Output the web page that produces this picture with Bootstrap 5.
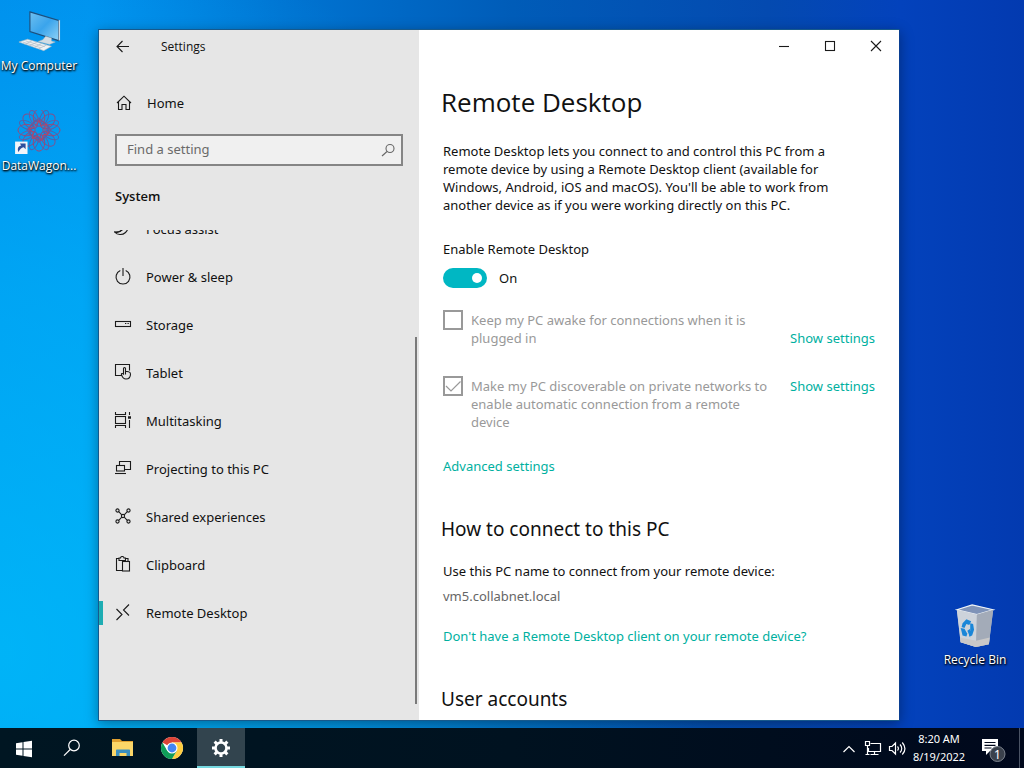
<!DOCTYPE html>
<html lang="en">
<head>
<meta charset="utf-8">
<meta name="viewport" content="width=device-width, initial-scale=1">
<title>Settings - Remote Desktop</title>
<link href="https://cdn.jsdelivr.net/npm/bootstrap@5.3.0/dist/css/bootstrap.min.css" rel="stylesheet">
<style>
body{font-family:"Noto Sans","Open Sans",sans-serif;font-size:13px;line-height:18px;color:#111;background:radial-gradient(ellipse 70% 95% at 0 85%,rgba(0,205,255,.6) 0%,rgba(0,200,255,.4) 50%,rgba(0,150,255,0) 100%),linear-gradient(90deg,#008dec 0%,#0090ee 9%,#0074d2 28%,#005cb8 50%,#044ab0 75%,#0342bc 88%,#033ab0 100%)}

/* desktop shortcuts */
.edge-left{width:98px;padding-top:10px}
.edge-right{width:124px;padding:0 10px 60px 0}
.shortcut{width:78px;color:#fff;font-size:12px;line-height:16px;font-family:"Open Sans","Noto Sans",sans-serif;white-space:nowrap;text-decoration:none;text-shadow:0 1px 2px #000,1px 1px 2px #000}
.shortcut svg{width:48px;height:44px}

/* window */
.win{margin:29px 0 7px;border:1px solid #16598c;border-right-color:#0a3f92;background:#fff;box-shadow:0 3px 12px rgba(0,0,0,.35)}
.side{width:320px;background:#e6e6e6}
.bar{height:34px}
.bar-title{padding-left:14px;font-size:12px;font-family:"Open Sans","Noto Sans",sans-serif}
.plain{border:0;padding:0;background:none;color:inherit}
.back{width:48px}
.cap{width:46px;height:32px}
.line-icon{width:18px;height:18px;flex:none;fill:none;stroke:#1a1a1a;stroke-width:1.1}
.nav-item-row{height:48px;padding-left:15px;gap:14px;color:#111;text-decoration:none}
.home-row{margin-top:15px;padding-left:16px}
.find{height:32px;margin:7px 16px 0;padding:0 4px 0 10px;border:2px solid #858585;background:#f0f0f0}
.find input{border:0;outline:0;padding:0 0 2px;background:none;color:#666}
.find input::placeholder{color:#6a6a6a;opacity:1}
.find .line-icon{stroke:#666}
.group-title{margin:18px 16px 22px;line-height:24px;font-weight:600;font-family:"Open Sans","Noto Sans",sans-serif}
.scrolled{margin-top:-25px}
.picked::before{content:"";position:absolute;left:0;width:4px;height:24px;background:#1eadb3}
.rail{right:2px;top:107px;bottom:16px;width:2px;background:#7a7a7a}

/* content */
.pane-body{padding:20px 24px 0}
.pane-body h1{margin:0 0 22px -2px;font:400 26px/36px "Open Sans","Noto Sans",sans-serif}
.pane-body h2{margin:41px 0 20px -2px;font-size:19px;line-height:26px;font-weight:400}
.blurb{max-width:400px;margin-bottom:26px}
.teal{color:#00b09f;text-decoration:none}
.switch-row{margin:10px 0 23px;gap:12px}
.toggle.form-check-input{width:44px;height:20px;margin:0;border:0;border-radius:10px;background:#00b7c3 url("data:image/svg+xml,%3Csvg xmlns='http://www.w3.org/2000/svg' viewBox='0 0 44 20'%3E%3Ccircle cx='34' cy='10' r='5' fill='%23fff'/%3E%3C/svg%3E") 0 0/44px 20px}
.option-row{margin-bottom:30px}
.option-row + .option-row{margin-bottom:26px}
.option{gap:8px;color:#999}
.box.form-check-input{flex:none;width:20px;height:20px;margin:-1px 0 0;border:2px solid #999;border-radius:0;background-color:#fff;opacity:1}
.box.form-check-input:checked{background-size:16px 16px;background-image:url("data:image/svg+xml,%3Csvg xmlns='http://www.w3.org/2000/svg' viewBox='0 0 16 16'%3E%3Cpath d='M1 8l5 5L15.500 3.500' fill='none' stroke='%23999' stroke-width='1.200'/%3E%3C/svg%3E")}
.option label{width:304px}
.pc-lead{margin-bottom:7px}
.pc-name{margin-bottom:22px;color:#666}

/* taskbar */
.taskbar{height:40px;background:linear-gradient(90deg,#001622,#001220 50%,#00081c);color:#fff}
.task{width:48px;height:40px;border:0;padding:0;background:none}
.task.pinned{width:49px}
.task.current{margin-left:3px;background:#32444e;box-shadow:inset 0 -2px #76d9e0}
.clock{width:60px;font-size:11px;line-height:18px}
.tray{width:24px;height:40px}
.tray svg,.line-white{fill:none;stroke:#fff;stroke-width:1.2}
.notice{width:50px}
.peek{width:5px;border-left:1px solid #4a5364}
</style>
</head>
<body class="d-flex flex-column vh-100 overflow-hidden">
<main class="d-flex flex-grow-1 overflow-hidden">
  <div class="edge-left d-flex flex-column flex-shrink-0">
    <a href="#" class="shortcut d-flex flex-column align-items-center mb-4">
      <svg viewBox="0 0 48 46">
        <defs><linearGradient id="scr" x1="0" y1="0" x2="1" y2="1"><stop offset="0" stop-color="#6fc0f0"/><stop offset=".5" stop-color="#3aa4ec"/><stop offset="1" stop-color="#8fd2f6"/></linearGradient></defs>
        <path d="M14.500 2L44.500 11V32L14.500 22.500Z" fill="url(#scr)" stroke="#1d4f7c" stroke-width="1.200"/>
        <path d="M44.500 11l1.500-.5V31.500l-1.500.5z" fill="#cfdbe4"/>
        <path d="M31 27.500l6 1.800v3.200l4 1-6 2.500-12-3 5-2z" fill="#d4dde4" stroke="#9fb0bc" stroke-width=".5"/>
        <path d="M3 33.500L12 30.500 37 38 29 42.500Z" fill="#eef2f5" stroke="#a9b8c4" stroke-width=".6"/>
        <path d="M7 33.500l19 6M10 32.300l20 6M9 36l8-4M14 37.500l8-4M19 39l8-4M24 40.500l8-4" stroke="#aebac4" stroke-width=".7"/>
      </svg>
      <span class="mt-1">My Computer</span>
    </a>
    <a href="#" class="shortcut d-flex flex-column align-items-center mt-2">
      <svg class="mt-1" viewBox="0 0 48 46" fill="none" stroke-width="1">
        <g transform="translate(24 21)">
          <g stroke="#a5446e"><ellipse cy="-13" rx="6" ry="9"/><ellipse cy="13" rx="6" ry="9"/><ellipse cx="-13" rx="9" ry="6"/><ellipse cx="13" rx="9" ry="6"/><circle r="10"/></g>
          <g stroke="#80508c" transform="rotate(45)"><ellipse cy="-13" rx="6" ry="9"/><ellipse cy="13" rx="6" ry="9"/><ellipse cx="-13" rx="9" ry="6"/><ellipse cx="13" rx="9" ry="6"/><rect x="-9" y="-9" width="18" height="18"/></g>
          <g stroke="#4f62ac" transform="rotate(22.500)"><ellipse cy="-14" rx="4" ry="8"/><ellipse cy="14" rx="4" ry="8"/><ellipse cx="-14" rx="8" ry="4"/><ellipse cx="14" rx="8" ry="4"/><rect x="-8" y="-8" width="16" height="16"/></g>
          <g stroke="#6a5ba0" transform="rotate(67.500)"><ellipse cy="-14" rx="4" ry="8"/><ellipse cy="14" rx="4" ry="8"/><ellipse cx="-14" rx="8" ry="4"/><ellipse cx="14" rx="8" ry="4"/></g>
          <path stroke="#c2405c" d="M0-10l2.500 6 6-2.500L6 0l4 4-6 1-1 6-4-5-6 3 1-7-5-3 6-2z"/>
        </g>
        <rect x="-1" y="33" width="13" height="13" fill="#f2f5fa"/>
        <path d="M2.500 44c-1.500-4 0-6.500 3-7L4 35h6v6L8 39c-2.500.5-4 2-5.500 5z" fill="#2d4f9c"/>
      </svg>
      <span class="mt-1">DataWagon...</span>
    </a>
  </div>

  <section class="win d-flex flex-grow-1 overflow-hidden" aria-label="Settings">
    <aside class="side d-flex flex-column flex-shrink-0">
      <header class="bar d-flex align-items-center flex-shrink-0">
        <button class="plain back d-flex justify-content-center" aria-label="Back"><svg class="line-icon" viewBox="0 0 18 18"><path d="M15 8.500H3M8.500 3L3 8.500 8.500 14"/></svg></button>
        <span class="bar-title">Settings</span>
      </header>
      <a href="#" class="nav-item-row home-row d-flex align-items-center flex-shrink-0">
        <svg class="line-icon" viewBox="0 0 18 18"><path d="M2 9L9 2.200 16 9M3.500 7.800V15.500H7V10.500h4V15.500h3.500V7.800"/></svg>Home</a>
      <div class="find d-flex align-items-center flex-shrink-0">
        <input type="text" class="flex-grow-1" placeholder="Find a setting" aria-label="Find a setting">
        <svg class="line-icon" viewBox="0 0 18 18"><circle cx="11" cy="7.500" r="4"/><path d="M8 10.500L3 15"/></svg>
      </div>
      <div class="group-title flex-shrink-0">System</div>
      <div class="position-relative flex-grow-1 overflow-hidden">
        <nav class="scrolled d-flex flex-column">
          <a href="#" class="nav-item-row d-flex align-items-center"><svg class="line-icon" viewBox="0 0 18 18"><path d="M12 1.500a7.500 7.500 0 1 1-11.500 10.500C4 13 6.500 12 8.500 9.500"/><path d="M.5 12C7 13 12.500 7 12 1.500"/></svg>Focus assist</a>
          <a href="#" class="nav-item-row d-flex align-items-center"><svg class="line-icon" viewBox="0 0 18 18"><path d="M6.300 2.600a7 7 0 1 0 5.400 0M9 0v8"/></svg>Power &amp; sleep</a>
          <a href="#" class="nav-item-row d-flex align-items-center"><svg class="line-icon" viewBox="0 0 18 18"><rect x="1.500" y="5.500" width="15" height="5"/><path d="M11 7.500h1.300M13.500 7.500h1.300"/></svg>Storage</a>
          <a href="#" class="nav-item-row d-flex align-items-center"><svg class="line-icon" viewBox="0 0 18 18"><path d="M8 11.500H1.500V.5h14v6"/><path d="M11.500 10.500V4.500c0-1.300-2-1.300-2 0V10c-1.200-1-2.500-.5-2 .7.800 2.800 2 4.300 4.500 4.300 3 0 4.500-2 4.500-5 0-1.500-.8-2-2-2.200l-3-.5"/></svg>Tablet</a>
          <a href="#" class="nav-item-row d-flex align-items-center"><svg class="line-icon" viewBox="0 0 18 18"><path d="M1.500 0v2.500h10V0M1.500 16V13.500h10V16"/><rect x="1.500" y="4.500" width="10" height="7"/><path d="M15.500 0v3M15.500 8v8"/><path d="M14 5.500h3" stroke-width="2.500"/></svg>Multitasking</a>
          <a href="#" class="nav-item-row d-flex align-items-center"><svg class="line-icon" viewBox="0 0 18 18"><path d="M5.500 5.500v-4h11v8h-6"/><rect x="2.500" y="5.500" width="8" height="5.500"/><path d="M1 13.500h11"/></svg>Projecting to this PC</a>
          <a href="#" class="nav-item-row d-flex align-items-center"><svg class="line-icon" viewBox="0 0 18 18"><circle cx="3.500" cy="2.500" r="1.600"/><circle cx="14.500" cy="2.500" r="1.600"/><circle cx="3.500" cy="13.500" r="1.600"/><circle cx="14.500" cy="13.500" r="1.600"/><circle cx="9" cy="8" r="1.600"/><path d="M4.700 3.700L7.800 6.800M13.300 3.700l-3.100 3.100M4.700 12.300l3.100-3.100M13.300 12.300l-3.100-3.100"/></svg>Shared experiences</a>
          <a href="#" class="nav-item-row d-flex align-items-center"><svg class="line-icon" viewBox="0 0 18 18"><path d="M8.500 14.500h-6v-12H5M11.500 2.500H14V5M5 4.500v-2.500h1.500C6.500 0 10 0 10 2h1.500v2.500z"/><rect x="8.500" y="5.500" width="7" height="9.500"/></svg>Clipboard</a>
          <a href="#" class="nav-item-row picked d-flex align-items-center" aria-current="page"><svg class="line-icon" viewBox="0 0 18 18"><path d="M2.500 5l5.500 5.500L2.500 16M15 .5L9.500 6 15 11.500"/></svg>Remote Desktop</a>
        </nav>
        <div class="rail position-absolute"></div>
      </div>
    </aside>

    <div class="flex-grow-1">
      <header class="bar d-flex justify-content-end">
        <button class="plain cap" aria-label="Minimize"><svg class="line-icon" viewBox="0 0 18 18"><path d="M4 8.500h10"/></svg></button>
        <button class="plain cap" aria-label="Maximize"><svg class="line-icon" viewBox="0 0 18 18"><rect x="4.500" y="3.500" width="9" height="9"/></svg></button>
        <button class="plain cap" aria-label="Close"><svg class="line-icon" viewBox="0 0 18 18"><path d="M4 3l10 10M14 3L4 13"/></svg></button>
      </header>
      <div class="pane-body">
        <h1>Remote Desktop</h1>
        <p class="blurb">Remote Desktop lets you connect to and control this PC from a remote device by using a Remote Desktop client (available for Windows, Android, iOS and macOS). You'll be able to work from another device as if you were working directly on this PC.</p>
        <label for="enable">Enable Remote Desktop</label>
        <div class="switch-row d-flex align-items-center form-switch p-0">
          <input class="toggle form-check-input" type="checkbox" role="switch" id="enable" checked><span>On</span>
        </div>
        <div class="option-row d-flex justify-content-between align-items-end">
          <div class="option d-flex"><input class="box form-check-input" type="checkbox" id="awake" disabled><label for="awake">Keep my PC awake for connections when it is plugged in</label></div>
          <a href="#" class="teal">Show settings</a>
        </div>
        <div class="option-row d-flex justify-content-between">
          <div class="option d-flex"><input class="box form-check-input" type="checkbox" id="discover" checked disabled><label for="discover">Make my PC discoverable on private networks to enable automatic connection from a remote device</label></div>
          <a href="#" class="teal">Show settings</a>
        </div>
        <a href="#" class="teal d-block">Advanced settings</a>
        <h2>How to connect to this PC</h2>
        <p class="pc-lead">Use this PC name to connect from your remote device:</p>
        <p class="pc-name">vm5.collabnet.local</p>
        <a href="#" class="teal d-block">Don't have a Remote Desktop client on your remote device?</a>
        <h2>User accounts</h2>
      </div>
    </div>
  </section>

  <div class="edge-right d-flex flex-column justify-content-end align-items-end flex-shrink-0">
    <a href="#" class="shortcut d-flex flex-column align-items-center">
      <svg viewBox="0 0 48 46">
        <path d="M5 6L21 1l22 5-4.500 36L25 45 9 40z" fill="#b9c2cf"/>
        <path d="M5 6L21 1l22 5-17 5z" fill="#7f93b8" stroke="#eef3f8" stroke-width="1.200"/>
        <path d="M5 6l21 5-1 34L9 40z" fill="#cdd3db"/><path d="M26 11l17-5-4.500 36L25 45z" fill="#a3abb8"/>
        <path d="M8.500 35L25 38.500 39.500 35l-1 7L25 45 9 40z" fill="#c9c8c8"/>
        <g fill="#1a86d8"><path d="M11 20l4-4 5 2-2 4-3-1-2 4-3-1z"/><path d="M9 25l4 1 3 5-1 3-4-1z"/><path d="M19 20l3 1 1 6-2 6-3 1 0-4 1-2z"/><path d="M16 28l3-2v9z"/></g>
      </svg>
      <span class="mt-1">Recycle Bin</span>
    </a>
  </div>
</main>

<footer class="taskbar d-flex flex-shrink-0 align-items-stretch">
  <button class="task" aria-label="Start"><svg width="18" height="18" viewBox="0 0 18 18" fill="#fff"><path d="M1 3.200l6.500-1V8.500H1zM8.500 2L17 .8V8.500H8.500zM1 9.500h6.500v6.300l-6.500-1zM8.500 9.500H17v7.700L8.500 16z"/></svg></button>
  <button class="task" aria-label="Search"><svg class="line-white" width="20" height="20" viewBox="0 0 20 20"><circle cx="12" cy="7.500" r="5.300"/><path d="M8.200 11.500L2 17.700"/></svg></button>
  <button class="task pinned ms-0 ps-1" aria-label="File Explorer"><svg width="24" height="20" viewBox="0 0 24 20"><path d="M1 1h8l2 2h11v5H1z" fill="#e0a030"/><path d="M1 4h21v14H1z" fill="#fbd668"/><path d="M5 18v-5.500c0-.8.500-1 1-1h12c.600 0 1 .300 1 1V18h-3.500v-3h-7v3z" fill="#3b8fc0"/></svg></button>
  <button class="task pinned ps-1" aria-label="Chrome"><svg width="24" height="24" viewBox="0 0 24 24"><circle cx="12" cy="12" r="11" fill="#fff"/><path d="M12 12L2.470 6.500A11 11 0 0 1 21.530 6.500H12z" fill="#db4437"/><path d="M21.530 6.500A11 11 0 0 1 12 23l4.760-8.250L12 6.500z" fill="#ffcd40"/><path d="M2.470 6.500A11 11 0 0 0 12 23l4.760-8.250L7.240 14.750z" fill="#0f9d58"/><circle cx="12" cy="12" r="5.500" fill="#fff"/><circle cx="12" cy="12" r="4.400" fill="#4285f4"/></svg></button>
  <button class="task current" aria-label="Settings"><svg width="20" height="20" viewBox="-10 -10 20 20"><g fill="#fff"><circle r="6.800"/><g id="teeth"><rect x="-1.500" y="-9" width="3" height="18"/><rect x="-9" y="-1.500" width="18" height="3"/></g><use href="#teeth" transform="rotate(45)"/></g><circle r="4.200" fill="#32444e"/></svg></button>
  <div class="ms-auto d-flex align-items-center">
    <button class="task tray" aria-label="Show hidden icons"><svg width="14" height="14" viewBox="0 0 14 14"><path d="M1.500 9L7 3.500 12.500 9"/></svg></button>
    <button class="task tray" aria-label="Network"><svg width="18" height="18" viewBox="0 0 18 18"><path d="M6.500 3.500h10v8H4.500V8M10.500 11.500v3M6.500 14.500h8"/><path d="M1.500 1.500h4v4h-4zM3.500 5.500v9M1.500 14.500h4"/></svg></button>
    <button class="task tray" aria-label="Volume"><svg width="18" height="18" viewBox="0 0 18 18"><path d="M1.500 6.500H4L7.500 3v11L4 10.500H1.500zM9.500 6.500c1.200 1.200 1.200 3 0 4M12 4.500c2.300 2.300 2.300 6 0 8M14.300 2.500c3.300 4 3.300 8.500 0 12"/></svg></button>
    <time class="clock text-center" datetime="2022-08-19T08:20">8:20 AM<br>8/19/2022</time>
    <button class="task notice" aria-label="Notifications, 1 new"><svg width="28" height="28" viewBox="0 0 28 28"><path d="M2 5h16v12H10l-4 4v-4H2z" fill="#fff"/><path d="M4.500 8.500h11M4.500 11.300h11M4.500 14h7" stroke="#00081c" stroke-width="1.200"/><circle cx="17.500" cy="20" r="7.500" fill="#3a414c" stroke="#7c838e"/><text x="17.500" y="24.500" text-anchor="middle" font-size="12" fill="#fff">1</text></svg></button>
    <div class="peek h-100"></div>
  </div>
</footer>
<script src="https://cdn.jsdelivr.net/npm/bootstrap@5.3.0/dist/js/bootstrap.bundle.min.js"></script>
</body>
</html>
